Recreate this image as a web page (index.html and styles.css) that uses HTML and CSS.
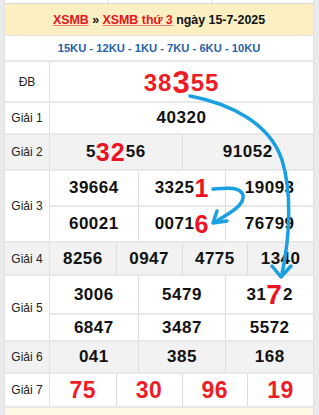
FILE: index.html
```html
<!DOCTYPE html>
<html lang="vi">
<head>
<meta charset="utf-8">
<link rel="stylesheet" href="styles.css">
</head>
<body>
<div class="page">
  <div class="prev"><span></span><span></span><span></span></div>
  <div class="board">
    <div class="title"><a class="lnk">XSMB</a> » <a class="lnk">XSMB thứ 3</a> ngày 15-7-2025</div>
    <div class="codes">15KU - 12KU - 1KU - 7KU - 6KU - 10KU</div>

    <div class="row h-db">
      <div class="lbl">ĐB</div>
      <div class="cells n1"><div class="cell db">38<span class="big">3</span>55</div></div>
    </div>

    <div class="row h-1">
      <div class="lbl">Giải 1</div>
      <div class="cells n1"><div class="cell">40320</div></div>
    </div>

    <div class="row h-2 grey">
      <div class="lbl">Giải 2</div>
      <div class="cells n2">
        <div class="cell">5<span class="hl">32</span>56</div>
        <div class="cell">91052</div>
      </div>
    </div>

    <div class="row h-3">
      <div class="lbl">Giải 3</div>
      <div class="cells n3">
        <div class="cell">39664</div>
        <div class="cell">3325<span class="hl">1</span></div>
        <div class="cell">19093</div>
        <div class="cell">60021</div>
        <div class="cell">0071<span class="hl">6</span></div>
        <div class="cell">76799</div>
      </div>
    </div>

    <div class="row h-4 grey">
      <div class="lbl">Giải 4</div>
      <div class="cells n4">
        <div class="cell">8256</div>
        <div class="cell">0947</div>
        <div class="cell">4775</div>
        <div class="cell">1340</div>
      </div>
    </div>

    <div class="row h-5">
      <div class="lbl">Giải 5</div>
      <div class="cells n3">
        <div class="cell">3006</div>
        <div class="cell">5479</div>
        <div class="cell">31<span class="hl big7">7</span>2</div>
        <div class="cell">6847</div>
        <div class="cell">3487</div>
        <div class="cell">5572</div>
      </div>
    </div>

    <div class="row h-6 grey">
      <div class="lbl">Giải 6</div>
      <div class="cells n3">
        <div class="cell">041</div>
        <div class="cell">385</div>
        <div class="cell">168</div>
      </div>
    </div>

    <div class="row h-7">
      <div class="lbl">Giải 7</div>
      <div class="cells n4">
        <div class="cell red">75</div>
        <div class="cell red">30</div>
        <div class="cell red">96</div>
        <div class="cell red">19</div>
      </div>
    </div>
  </div>
  <div class="next"></div>

  <svg class="arrows" width="319" height="415" viewBox="0 0 319 415">
    <path d="M190,96 C232,104 270,124 282,160 C292,192 290,236 282,274" />
    <path d="M272,266 L281,277 L291,266" />
    <path d="M213,189 C226,188 240,186 243,195 C245,205 230,213 215,222" />
    <path d="M217,211 L213,223 L227,221" />
  </svg>
</div>
</body>
</html>
```

FILE: styles.css
```css
* { box-sizing: border-box; }
html, body { margin: 0; padding: 0; }
body {
  background: #e9eaec;
  font-family: "Liberation Sans", Arial, sans-serif;
  width: 319px;
  height: 415px;
  overflow: hidden;
}
.page {
  position: relative;
  padding: 0 5px 0 4px;
}
.prev {
  display: grid;
  grid-template-columns: 104px 103px 1fr;
  height: 3px;
  background: #fff;
  border-left: 1px solid #dedede;
}
.prev span { border-right: 1px solid #dedede; }
.board {
  background: #fff;
  border-top: 1px solid #d8d8d8;
  border-left: 1px solid #e0e0e0;
  border-right: 1px solid #e0e0e0;
}
.title {
  height: 32px;
  line-height: 32px;
  background: #fcf0c3;
  text-align: center;
  font-size: 12.4px;
  font-weight: bold;
  color: #111;
  border-bottom: 1px solid #e6e6e6;
  white-space: nowrap;
}
.lnk {
  color: #e8131c;
  text-decoration: underline;
  text-decoration-color: #f27a7f;
}
.codes {
  height: 24px;
  line-height: 24px;
  text-align: center;
  font-size: 11.2px;
  font-weight: bold;
  color: #2762a9;
}
.row {
  display: flex;
  border-top: 2px solid #e8e8e8;
}
.row.grey { background: #f2f2f2; }
.lbl {
  width: 45px;
  flex: none;
  display: flex;
  align-items: center;
  justify-content: center;
  font-size: 12px;
  color: #222;
  border-right: 1px solid #e0e0e0;
}
.cells {
  flex: 1;
  display: grid;
}
.n1 { grid-template-columns: 1fr; }
.n2 { grid-template-columns: 1fr 1fr; }
.n3 { grid-template-columns: 1fr 1fr 1fr; }
.n4 { grid-template-columns: 1fr 1fr 1fr 1fr; }
.cell {
  display: flex;
  align-items: center;
  justify-content: center;
  font-size: 17px;
  font-weight: bold;
  color: #111;
  letter-spacing: 0.5px;
}
.n2 .cell + .cell { border-left: 1px solid #dcdcdc; }
.n3 .cell:not(:nth-child(3n+1)) { border-left: 1px solid #dcdcdc; }
.n3 .cell:nth-child(n+4) { border-top: 2px solid #e8e8e8; }
.n4 .cell + .cell { border-left: 1px solid #dcdcdc; }

.h-db { height: 41px; }
.h-1 { height: 32px; }
.h-2 { height: 36px; }
.h-3 { height: 72px; }
.h-4 { height: 33px; }
.h-5 { height: 66px; }
.h-6 { height: 32px; }
.h-7 { height: 36px; border-bottom: 2px solid #e8e8e8; }

.db {
  color: #ee1c25;
  font-size: 24px;
  letter-spacing: 1px;
  padding-top: 2px;
}
.big { font-size: 31px; }
.hl { color: #ee1220; font-size: 25px; letter-spacing: 1px; }
.big7 { font-size: 28px; }
.red { color: #ee1c25; font-size: 23px; }

.next {
  height: 10px;
  background: #fdf8e6;
  border-left: 1px solid #e0e0e0;
  border-right: 1px solid #e0e0e0;
}
.arrows {
  position: absolute;
  left: 0;
  top: 0;
  pointer-events: none;
}
.arrows path {
  fill: none;
  stroke: #1aa0e2;
  stroke-width: 3.5;
  stroke-linecap: round;
  stroke-linejoin: round;
}
```
